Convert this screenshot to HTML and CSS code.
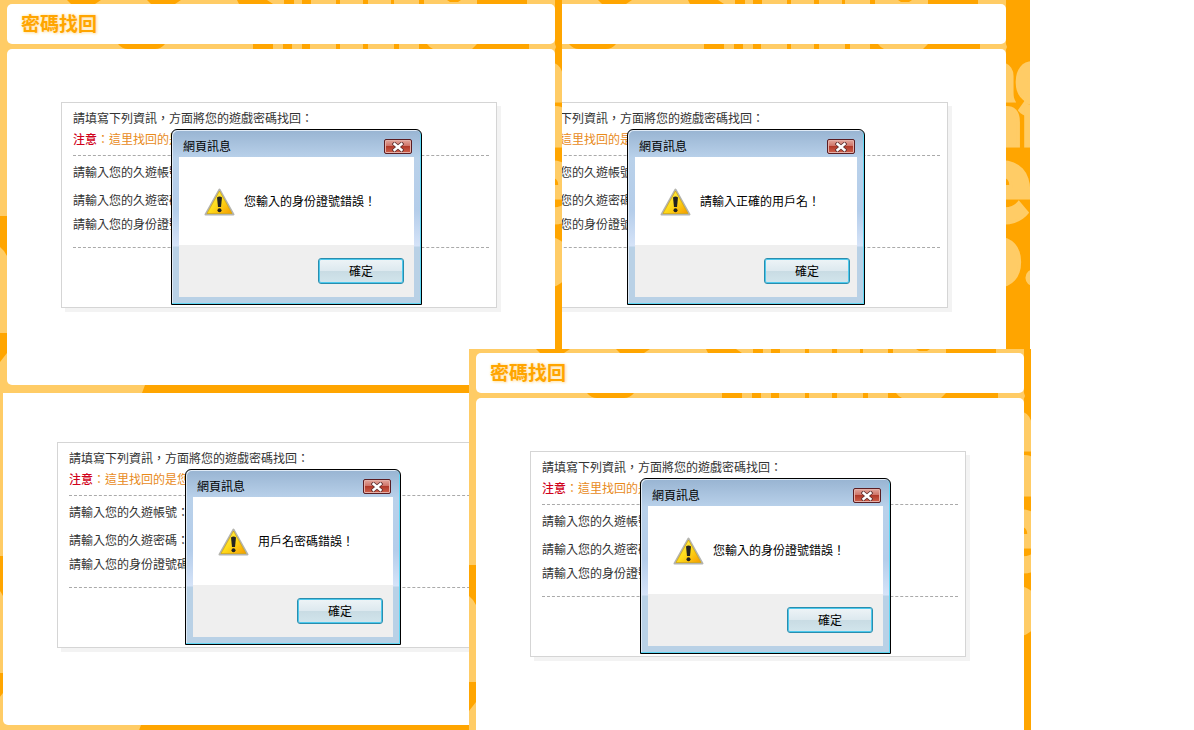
FILE: index.html
```html
<!DOCTYPE html>
<html lang="zh-Hant">
<head>
  <meta charset="UTF-8" />
  <meta name="viewport" content="width=device-width, initial-scale=1.0"/>
  <title>密碼找回</title>
  <link rel="stylesheet" href="styles.css">
</head>
<body>
  <!-- shared artwork -->
  <svg class="defs" aria-hidden="true">
    <defs>
      <symbol id="pattern" viewBox="0 0 579 393">
        <rect width="579" height="393" fill="#ffcc66"/>
        <g fill="#ffa500">
          <path d="M67 0h34l-6 4h-24zM147 0h34l-6 4h-24zM237 0h30l6 4h-34z"/>
          <path d="M284 0h10v4h-10zM302 0h9v4h-9zM336 0h4v4h-4zM363 0h5v4h-5zM391 0h3v4h-3zM419 0h5v4h-5zM447 0h14l-3 2h-8zM477 0h50v4h-50z"/>
          <path d="M118 44h47q-4 5-10 5h-27q-6 0-10-5zM253 44h20v5h-20zM283 44h9v5h-9zM302 44h8v5h-8zM336 44h4v5h-4zM363 44h5v5h-5zM394 44h5v5h-5zM419 44h8q2 3 6 5h-14zM477 44h52v5h-57z"/>
          <path d="M0 216h7v40q-3-6-7-9zM0 333h7v20l-7 9zM145 385h417v8h-420z"/>
          <path d="M555 0h24v393h-24z"/>
        </g>
        <path fill="#ffcc66" d="M550 42l5 2 1 3-2 5h-4z"/>
        <g class="pattern-text" fill="#ffcc66">
          <text x="526" y="101" font-size="72">ag</text>
          <text x="530" y="146" font-size="72">ni</text>
          <text x="519" y="222" font-size="112">e</text>
          <text x="522" y="285" font-size="87">o.</text>
        </g>
      </symbol>
      <linearGradient id="amber" x1="0" y1="0" x2="1" y2="1">
        <stop offset="0" stop-color="#fff36a"/>
        <stop offset=".5" stop-color="#ffdc1a"/>
        <stop offset="1" stop-color="#f59b00"/>
      </linearGradient>
      <symbol id="warn" viewBox="0 0 31 28">
        <path d="M15.500 1.500L29.500 26.500H1.500Z" fill="#d9d9d0" stroke="#b4b4ae" stroke-width="2" stroke-linejoin="round"/>
        <path d="M15.500 3L28 25.500H3Z" fill="url(#amber)" stroke="#d2a400" stroke-width=".7" stroke-linejoin="round"/>
        <path d="M13 9.500q2.500-2 5 0l-1 9.500h-3z" fill="#222"/>
        <circle cx="15.500" cy="22.200" r="2" fill="#222"/>
      </symbol>
      <symbol id="cross" viewBox="0 0 12 10">
        <path d="M2.500 2l7 6M9.500 2l-7 6" stroke="#5d3030" stroke-width="4" stroke-linecap="square"/>
        <path d="M2.500 2l7 6M9.500 2l-7 6" stroke="#fff" stroke-width="2.400" stroke-linecap="square"/>
      </symbol>
    </defs>
  </svg>

  <main class="desktop">
    <!-- wrong ID number -->
    <section class="shot shot-a">
      <div class="page">
        <svg class="pattern" viewBox="0 0 579 393" aria-hidden="true"><use href="#pattern"/></svg>
        <header class="bar"><h1>密碼找回</h1></header>
        <div class="card">
          <form class="box">
            <div class="intro">
              <p>請填寫下列資訊，方面將您的遊戲密碼找回：</p>
              <p class="note"><b>注意</b>：這里找回的是您</p>
            </div>
            <div class="fields">
              <p>請輸入您的久遊帳號：</p>
              <p>請輸入您的久遊密碼：</p>
              <p>請輸入您的身份證號碼：</p>
            </div>
          </form>
        </div>
        <div class="dialog" role="alertdialog" aria-label="網頁訊息">
          <div class="dialog-title">
            <span>網頁訊息</span>
            <button type="button" class="close" aria-label="關閉"><svg><use href="#cross"/></svg></button>
          </div>
          <div class="dialog-body"><svg class="warn"><use href="#warn"/></svg><p>您輸入的身份證號錯誤！</p></div>
          <div class="dialog-foot"><button type="button" class="ok">確定</button></div>
        </div>
      </div>
    </section>

    <!-- wrong user name -->
    <section class="shot shot-b">
      <div class="page">
        <svg class="pattern" viewBox="0 0 579 393" aria-hidden="true"><use href="#pattern"/></svg>
        <header class="bar"></header>
        <div class="card">
          <form class="box">
            <div class="intro">
              <p>請填寫下列資訊，方面將您的遊戲密碼找回：</p>
              <p class="note"><b>注意</b>：這里找回的是您</p>
            </div>
            <div class="fields">
              <p>請輸入您的久遊帳號：</p>
              <p>請輸入您的久遊密碼：</p>
              <p>請輸入您的身份證號碼：</p>
            </div>
          </form>
        </div>
        <div class="dialog" role="alertdialog" aria-label="網頁訊息">
          <div class="dialog-title">
            <span>網頁訊息</span>
            <button type="button" class="close" aria-label="關閉"><svg><use href="#cross"/></svg></button>
          </div>
          <div class="dialog-body"><svg class="warn"><use href="#warn"/></svg><p>請輸入正確的用戶名！</p></div>
          <div class="dialog-foot"><button type="button" class="ok">確定</button></div>
        </div>
      </div>
    </section>

    <!-- wrong user name or password -->
    <section class="shot shot-c">
      <div class="page">
        <svg class="pattern" viewBox="0 0 579 393" aria-hidden="true"><use href="#pattern"/></svg>
        <header class="bar"></header>
        <div class="card">
          <form class="box">
            <div class="intro">
              <p>請填寫下列資訊，方面將您的遊戲密碼找回：</p>
              <p class="note"><b>注意</b>：這里找回的是您</p>
            </div>
            <div class="fields">
              <p>請輸入您的久遊帳號：</p>
              <p>請輸入您的久遊密碼：</p>
              <p>請輸入您的身份證號碼：</p>
            </div>
          </form>
        </div>
        <div class="dialog" role="alertdialog" aria-label="網頁訊息">
          <div class="dialog-title">
            <span>網頁訊息</span>
            <button type="button" class="close" aria-label="關閉"><svg><use href="#cross"/></svg></button>
          </div>
          <div class="dialog-body"><svg class="warn"><use href="#warn"/></svg><p>用戶名密碼錯誤！</p></div>
          <div class="dialog-foot"><button type="button" class="ok">確定</button></div>
        </div>
      </div>
    </section>

    <!-- wrong ID number, front window -->
    <section class="shot shot-d">
      <div class="page">
        <svg class="pattern" viewBox="0 0 579 393" aria-hidden="true"><use href="#pattern"/></svg>
        <header class="bar"><h1>密碼找回</h1></header>
        <div class="card">
          <form class="box">
            <div class="intro">
              <p>請填寫下列資訊，方面將您的遊戲密碼找回：</p>
              <p class="note"><b>注意</b>：這里找回的是您</p>
            </div>
            <div class="fields">
              <p>請輸入您的久遊帳號：</p>
              <p>請輸入您的久遊密碼：</p>
              <p>請輸入您的身份證號碼：</p>
            </div>
          </form>
        </div>
        <div class="dialog" role="alertdialog" aria-label="網頁訊息">
          <div class="dialog-title">
            <span>網頁訊息</span>
            <button type="button" class="close" aria-label="關閉"><svg><use href="#cross"/></svg></button>
          </div>
          <div class="dialog-body"><svg class="warn"><use href="#warn"/></svg><p>您輸入的身份證號錯誤！</p></div>
          <div class="dialog-foot"><button type="button" class="ok">確定</button></div>
        </div>
      </div>
    </section>
  </main>
</body>
</html>
```
FILE: styles.css
```css
:root {
  --orange: #ffa500;
  --text: #333;
  --note: #e88a1a;
  --red: #d0021b;
}

* {
  box-sizing: border-box;
}

body {
  margin: 0;
  background: #fff;
  color: var(--text);
  font-family: "Liberation Sans", "Noto Sans CJK TC", sans-serif;
  font-size: 12px;
}

p, h1 {
  margin: 0;
}

.defs {
  position: absolute;
  width: 0;
  height: 0;
}

.desktop {
  position: relative;
  height: 100vh;
  overflow: hidden;
}

/* overlapping windows */
.shot {
  position: absolute;
  display: flex;
  overflow: hidden;
}

.shot-a {
  left: 0;
  top: 0;
  width: 562px;
  height: 393px;
}

.shot-b {
  left: 562px;
  top: 0;
  width: 468px;
  height: 349px;
  justify-content: flex-end;
}

.shot-c {
  left: 0;
  top: 393px;
  width: 469px;
  bottom: 0;
}

.shot-c .page {
  margin: -53px 0 0 -4px;
}

.shot-d {
  left: 469px;
  top: 349px;
  width: 562px;
  bottom: 0;
}

.page {
  position: relative;
  flex: none;
  width: 579px;
  height: 393px;
  padding: 4px 24px 8px 7px;
  display: flex;
  flex-direction: column;
  gap: 5px;
}

.pattern {
  position: absolute;
  left: 0;
  top: 0;
  width: 579px;
  height: 393px;
}

.pattern-text {
  font-family: Roboto, sans-serif;
  font-weight: 900;
  stroke: #ffcc66;
  stroke-width: 3px;
}

.bar,
.card {
  position: relative;
  background: #fff;
  border-radius: 5px;
}

.bar {
  height: 40px;
  padding: 1px 0 0 14px;
  display: flex;
  align-items: center;
}

h1 {
  color: var(--orange);
  font-size: 19px;
  line-height: 25px;
  font-weight: 700;
  text-shadow: 0 0 3px #ffdf9e, 1px 1px 3px #ffe9bf;
}

.card {
  flex: 1;
  padding: 53px 58px 0 54px;
}

.box {
  height: 206px;
  padding: 6px 7px 0 11px;
  border: 1px solid #d5d5d5;
  box-shadow: 4px 4px 0 #f3f3f3;
  white-space: nowrap;
}

.intro {
  padding-bottom: 4px;
  border-bottom: 1px dashed #aaa;
  line-height: 21px;
}

.note {
  color: var(--note);
}

.note b {
  color: var(--red);
  font-weight: 500;
}

.fields {
  padding: 3px 0 12px;
  border-bottom: 1px dashed #aaa;
  line-height: 28px;
}

.fields p:last-child {
  line-height: 20px;
}

/* message box */
.dialog {
  position: absolute;
  left: 171px;
  top: 129px;
  width: 251px;
  padding: 0 7px 7px;
  border: 1px solid #000;
  border-radius: 6px 6px 0 0;
  background: linear-gradient(#98b4d2, #b9d1ea 28px, #b4cdea 80px, #d5e3f8 116px, #b9d1e6 117px);
  box-shadow: inset -1px -1px 0 #5fd8f5, inset 1px 1px 0 #dfeaf6;
  color: #000;
}

.shot-b .dialog {
  left: 176px;
  width: 238px;
}

.shot-c .dialog {
  left: 189px;
  width: 216px;
}

.dialog-title {
  height: 27px;
  padding: 6px 2px 0 4px;
  display: flex;
  align-items: center;
  justify-content: space-between;
  line-height: 16px;
}

.close {
  width: 28px;
  height: 15px;
  padding: 0;
  display: flex;
  align-items: center;
  justify-content: center;
  border: 1px solid #5b1d22;
  border-radius: 2px;
  background: linear-gradient(#e3a79d, #cf7468 45%, #b13a2a 50%, #d0614c);
  box-shadow: inset 0 0 0 1px #e5b0a8;
}

.close svg {
  width: 12px;
  height: 10px;
}

.dialog-body {
  height: 88px;
  padding: 2px 0 0 25px;
  display: flex;
  align-items: center;
  gap: 9px;
  background: #fff;
  white-space: nowrap;
}

.dialog-body p {
  padding-bottom: 4px;
}

.warn {
  width: 31px;
  height: 28px;
}

.dialog-foot {
  height: 52px;
  padding-right: 10px;
  display: flex;
  align-items: center;
  justify-content: flex-end;
  background: #efefef;
}

.shot-b .dialog-foot {
  padding-right: 7px;
}

.ok {
  width: 86px;
  height: 26px;
  padding: 0 0 2px;
  border: 1px solid #2a8dad;
  border-radius: 3px;
  background: linear-gradient(#eef4f7, #dde9ef 48%, #c9dce4 52%, #d2e5ec);
  box-shadow: inset 0 0 0 1px #4cc9ee;
  color: #000;
  font: inherit;
}
```
